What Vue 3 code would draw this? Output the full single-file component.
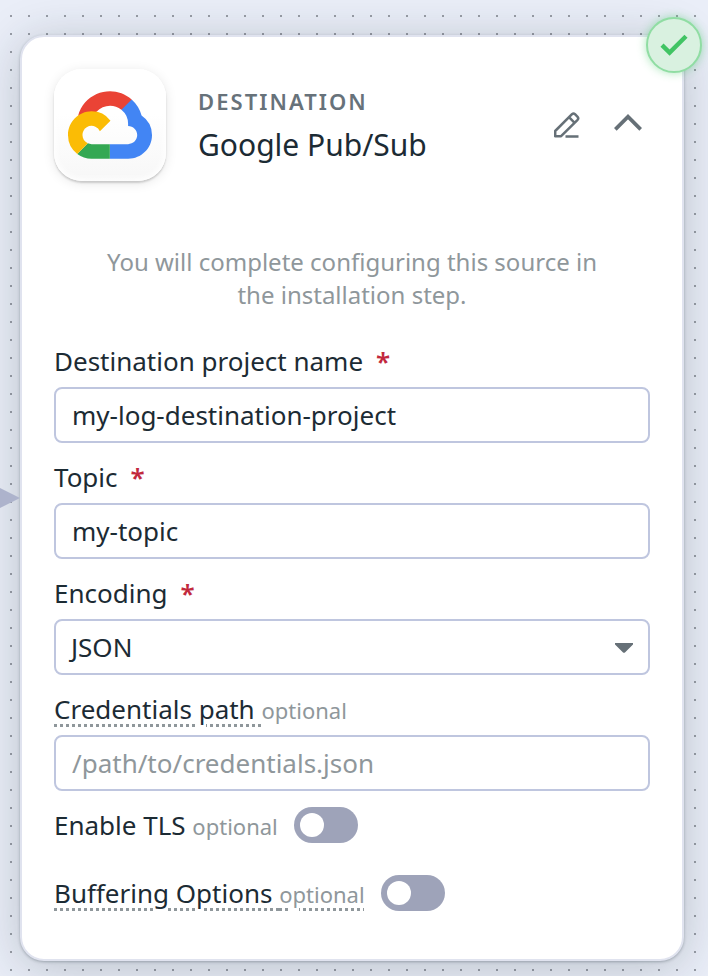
<script setup>
import { ref } from 'vue'

const project = ref('my-log-destination-project')
const topic = ref('my-topic')
const encoding = ref('JSON')
const credentials = ref('')
const tls = ref(false)
const buffering = ref(false)
</script>

<template>
  <div class="canvas">
    <svg class="arrow" viewBox="0 0 20 20"><path d="M0 0 20 10 0 20z" /></svg>
    <section class="card">
      <header class="head">
        <div class="logo">
          <svg viewBox="0 0 256 206" width="84" height="68">
            <path fill="#ea4335" d="M170.252 56.819l22.253-22.253 1.483-9.37C153.437-11.677 88.976-7.496 52.42 33.92 42.267 45.423 34.734 59.764 30.717 74.573l7.97-1.123 44.505-7.34 3.436-3.513c19.797-21.742 53.27-24.667 76.128-6.168z" />
            <path fill="#4285f4" d="M224.205 73.918a100.249 100.249 0 0 0-30.217-48.722l-31.232 31.232a55.515 55.515 0 0 1 20.379 44.037v5.544c15.35 0 27.797 12.445 27.797 27.796 0 15.352-12.446 27.485-27.797 27.485h-55.671v44.506h55.67c39.93.311 72.553-31.494 72.864-71.424a72.303 72.303 0 0 0-31.793-60.453" />
            <path fill="#34a853" d="M71.87 205.796h55.593V161.29H71.87a27.275 27.275 0 0 1-11.4-2.498l-32.248 32.247c12.567 9.489 27.9 14.825 43.647 14.757" />
            <path fill="#fbbc05" d="M71.87 61.425C31.94 61.664-.237 94.228.001 134.158a72.301 72.301 0 0 0 28.222 56.88l32.248-32.246c-13.99-6.322-20.208-22.786-13.887-36.776 6.32-13.99 22.786-20.208 36.775-13.888a27.796 27.796 0 0 1 13.887 13.888l32.248-32.248A72.224 72.224 0 0 0 71.87 61.425" />
          </svg>
        </div>
        <div class="titles">
          <div class="kind">DESTINATION</div>
          <h1>Google Pub/Sub</h1>
        </div>
        <div class="actions">
          <svg class="edit" viewBox="0 0 26 26" width="26" height="26">
            <path d="M1.2 24.2V19L18 2.2Q19.5 .9 21 2.2L23.6 4.8Q24.9 6.3 23.6 7.8L7.1 24.2ZM15 5.2 20.6 10.8M11.5 24.4H24.5" />
          </svg>
          <svg class="chevron" viewBox="0 0 28 17" width="28" height="17">
            <path d="M1.3 15.4 14 2.7 26.7 15.4" />
          </svg>
        </div>
      </header>
      <p class="note">You will complete configuring this source in<br />the installation step.</p>
      <form class="form" @submit.prevent>
        <label class="label"><span>Destination project name</span><span class="req">*</span></label>
        <input v-model="project" class="field" />
        <label class="label"><span>Topic</span><span class="req">*</span></label>
        <input v-model="topic" class="field" />
        <label class="label"><span>Encoding</span><span class="req">*</span></label>
        <div class="field select">
          <span>{{ encoding }}</span>
          <svg viewBox="0 0 18 10" width="18" height="10"><path d="M0 0H18V1.4L10.2 9.2Q9 10.4 7.8 9.2L0 1.4z" /></svg>
        </div>
        <label class="label"><span class="hint">Credentials path&nbsp;</span><span class="opt">optional</span></label>
        <input v-model="credentials" class="field" placeholder="/path/to/credentials.json" />
        <div class="toggle-row">
          <span class="toggle-label">Enable TLS <span class="opt">optional</span></span>
          <button type="button" class="toggle" :class="{ on: tls }" @click="tls = !tls"><i></i></button>
        </div>
        <div class="toggle-row">
          <span class="toggle-label hint">Buffering Options <span class="opt">optional</span></span>
          <button type="button" class="toggle" :class="{ on: buffering }" @click="buffering = !buffering"><i></i></button>
        </div>
      </form>
      <div class="badge">
        <svg viewBox="0 0 28 22" width="28" height="22"><path d="M2 11.2 9.6 18.6 26 2.2" /></svg>
      </div>
    </section>
  </div>
</template>

<style>
body {
  margin: 0;
  overflow: hidden;
}
</style>

<style scoped>
* {
  box-sizing: border-box;
}
.canvas {
  position: relative;
  width: 708px;
  height: 976px;
  padding: 35px 24px 15px 20px;
  overflow: hidden;
  font-family: 'Noto Sans', sans-serif;
  color: #1c2b34;
  background-color: #eaeef8;
}
.canvas::before {
  content: '';
  position: absolute;
  inset: 0;
  z-index: 1;
  background: conic-gradient(from 270deg at 2px 2px, #989ca6 90deg, transparent 0) 10px 15px / 18px 18px;
}
.arrow {
  position: absolute;
  z-index: 3;
  left: 0;
  top: 488px;
  width: 20px;
  height: 20px;
  fill: #adb3cc;
}
.card {
  position: relative;
  z-index: 2;
  height: 926px;
  padding: 32px;
  border: 2px solid #e0e3ef;
  border-radius: 24px;
  background: #fff;
  box-shadow: 0 1px 3px rgba(28, 43, 52, 0.3), 0 6px 48px rgba(28, 43, 52, 0.23);
}
.head {
  display: flex;
  height: 112px;
}
.logo {
  display: flex;
  align-items: center;
  justify-content: center;
  width: 112px;
  height: 112px;
  border-radius: 28px;
  background: linear-gradient(#fff 40%, #f7f7f7);
  box-shadow: inset 0 0 6px 2px #fff, 0 2px 2px rgba(0, 0, 0, 0.16), 0 2px 12px rgba(0, 0, 0, 0.1);
}
.titles {
  margin-left: 32px;
  padding-top: 17px;
}
.kind {
  height: 30px;
  line-height: 30px;
  font-size: 22px;
  font-weight: 600;
  letter-spacing: 2.05px;
  color: #67727a;
}
h1 {
  margin: 9px 0 0;
  line-height: 40px;
  font-size: 30px;
  font-weight: 400;
}
.actions {
  display: flex;
  gap: 34px;
  margin: 43px 8px 0 auto;
}
.actions path {
  fill: none;
  stroke: #667077;
}
.edit path {
  stroke-width: 2.5;
  stroke-linejoin: round;
}
.chevron {
  margin-top: 2px;
}
.chevron path {
  stroke-width: 3.8;
}
.note {
  margin: 64px 0 0;
  line-height: 33px;
  font-size: 24px;
  text-align: center;
  color: #8f979b;
}
.form {
  margin-top: 16px;
}
.label {
  display: flex;
  align-items: baseline;
  height: 60px;
  line-height: 36px;
  padding-top: 16px;
  font-size: 26px;
}
.req {
  margin-left: 13px;
  font-weight: 600;
  color: #c2293d;
}
.opt {
  font-size: 22px;
  color: #8f979b;
}
.hint {
  text-decoration: underline dotted #8f979b 3px;
  text-underline-offset: 5px;
}
.field {
  display: block;
  width: 596px;
  height: 56px;
  padding: 0 16px;
  border: 2px solid #bfc6df;
  border-radius: 8px;
  outline: 0;
  background: #fff;
  font: 26px 'Noto Sans', sans-serif;
  color: #1c2b34;
}
.field::placeholder {
  color: #8f979b;
  opacity: 1;
}
.select {
  display: flex;
  align-items: center;
  justify-content: space-between;
  padding: 0 15px;
}
.select svg {
  margin-top: 2px;
  fill: #667077;
}
.toggle-row {
  display: flex;
  align-items: center;
  height: 68px;
}
.toggle-label {
  line-height: 36px;
  font-size: 26px;
}
.toggle {
  width: 64px;
  height: 36px;
  margin-left: 16px;
  padding: 6px;
  border: 0;
  border-radius: 18px;
  background: #9ea3b9;
}
.toggle i {
  display: block;
  width: 24px;
  height: 24px;
  border-radius: 50%;
  background: #fff;
}
.toggle.on i {
  margin-left: auto;
}
.badge {
  position: absolute;
  top: -20px;
  right: -20px;
  display: flex;
  align-items: center;
  justify-content: center;
  width: 56px;
  height: 56px;
  border: 2px solid #90dda3;
  border-radius: 50%;
  background: #d9f1e0;
  box-shadow: 0 0 10px rgba(65, 200, 100, 0.45);
}
.badge path {
  fill: none;
  stroke: #41c464;
  stroke-width: 4.4;
}
</style>
